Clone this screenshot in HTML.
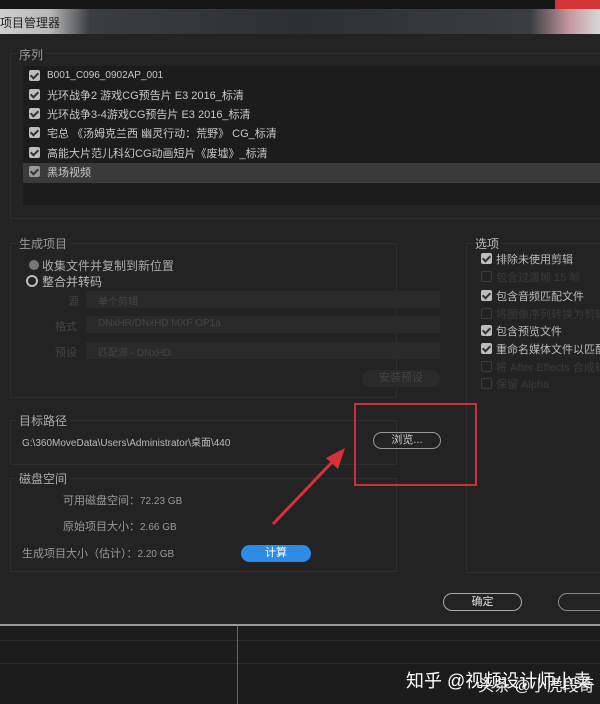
<!DOCTYPE html><html><head><meta charset="utf-8"><style>
*{margin:0;padding:0;box-sizing:border-box}
body{width:600px;height:704px;overflow:hidden;background:#232323;position:relative;font-family:"Liberation Sans","Noto Sans CJK SC",sans-serif;color:#c8c8c8;font-size:11px}
.a{position:absolute;white-space:nowrap}
.cb{position:absolute;width:11px;height:11px;background:#bdbdbd;border-radius:2px}
.cb::after{content:"";position:absolute;left:3px;top:1px;width:3px;height:6px;border:solid #333;border-width:0 2px 2px 0;transform:rotate(45deg)}
.ce{position:absolute;width:11px;height:11px;border:1px solid #3a3a3a;border-radius:2px}
.dd{position:absolute;left:86px;width:354px;height:17px;background:#2a2a2a;color:#444;font-size:10px;padding:2px 12px}
.fr{position:absolute;border:1px solid #2e2e2e}
</style></head><body>
<div class="a" style="left:0;top:0;width:600px;height:9px;background:#161616"></div>
<div class="a" style="left:555px;top:0;width:45px;height:9px;background:#d03434"></div>
<div class="a" style="left:0;top:9px;width:600px;height:25px;background:linear-gradient(90deg,#cfcfcf 0,#b8b8b8 50px,#3a3d42 90px,#2c2f33 300px,#3a3d42 530px,#c59aa0 570px,#d8d8d8 600px)"></div>
<div class="a" style="left:0;top:14px;color:#222;font-size:12px">项目管理器</div>
<div class="fr" style="left:10px;top:53px;width:600px;height:166px"></div>
<div class="a" style="left:16px;top:46px;background:#232323;padding:0 3px;font-size:12px;color:#999">序列</div>
<div class="a" style="left:23px;top:66px;width:580px;height:139px;background:#1c1c1c"></div>
<div class="a" style="left:23px;top:163px;width:580px;height:20px;background:#3a3a3a"></div>
<div class="cb" style="left:29px;top:70px"></div><div class="a" style="left:47px;top:70px;font-size:10px">B001_C096_0902AP_001</div>
<div class="cb" style="left:29px;top:89px"></div><div class="a" style="left:47px;top:87px">光环战争2 游戏CG预告片 E3 2016_标清</div>
<div class="cb" style="left:29px;top:108px"></div><div class="a" style="left:47px;top:106px">光环战争3-4游戏CG预告片 E3 2016_标清</div>
<div class="cb" style="left:29px;top:127px"></div><div class="a" style="left:47px;top:125px">宅总 《汤姆克兰西 幽灵行动：荒野》 CG_标清</div>
<div class="cb" style="left:29px;top:147px"></div><div class="a" style="left:47px;top:145px">高能大片范儿科幻CG动画短片《废墟》_标清</div>
<div class="cb" style="left:29px;top:166px;background:#999"></div><div class="a" style="left:47px;top:164px">黑场视频</div>
<div class="fr" style="left:10px;top:243px;width:387px;height:155px"></div>
<div class="a" style="left:16px;top:235px;background:#232323;padding:0 3px;font-size:12px;color:#999">生成项目</div>
<div class="a" style="left:29px;top:260px;width:10px;height:10px;border-radius:50%;background:#777"></div>
<div class="a" style="left:42px;top:257px;font-size:12px;color:#aaa">收集文件并复制到新位置</div>
<div class="a" style="left:26px;top:275px;width:12px;height:12px;border-radius:50%;border:2px solid #bbb"></div>
<div class="a" style="left:42px;top:273px;font-size:12px;color:#bbb">整合并转码</div>
<div class="a" style="left:68px;top:293px;color:#444">源</div><div class="dd" style="top:291px">单个剪辑</div>
<div class="a" style="left:55px;top:318px;color:#444">格式</div><div class="dd" style="top:316px">DNxHR/DNxHD MXF OP1a</div>
<div class="a" style="left:55px;top:344px;color:#444">预设</div><div class="dd" style="top:342px">匹配源 - DNxHD</div>
<div class="a" style="left:362px;top:370px;width:78px;height:17px;border-radius:9px;background:#2a2a2a;color:#444;text-align:center;line-height:17px">安装预设</div>
<div class="fr" style="left:466px;top:243px;width:140px;height:330px"></div>
<div class="a" style="left:473px;top:235px;background:#232323;padding:0 2px;font-size:12px;color:#bbb">选项</div>
<div class="cb" style="left:481px;top:253px"></div><div class="a" style="left:496px;top:251px;color:#bbb">排除未使用剪辑</div>
<div class="ce" style="left:481px;top:271px"></div><div class="a" style="left:496px;top:269px;color:#3a3a3a">包含过渡帧 15 帧</div>
<div class="cb" style="left:481px;top:290px"></div><div class="a" style="left:496px;top:288px;color:#bbb">包含音频匹配文件</div>
<div class="ce" style="left:481px;top:308px"></div><div class="a" style="left:496px;top:306px;color:#3a3a3a">将图像序列转换为剪辑</div>
<div class="cb" style="left:481px;top:325px"></div><div class="a" style="left:496px;top:323px;color:#bbb">包含预览文件</div>
<div class="cb" style="left:481px;top:343px"></div><div class="a" style="left:496px;top:341px;color:#bbb">重命名媒体文件以匹配</div>
<div class="ce" style="left:481px;top:361px"></div><div class="a" style="left:496px;top:359px;color:#3a3a3a">将 After Effects 合成转换</div>
<div class="ce" style="left:481px;top:378px"></div><div class="a" style="left:496px;top:376px;color:#3a3a3a">保留 Alpha</div>
<div class="fr" style="left:10px;top:420px;width:387px;height:45px"></div>
<div class="a" style="left:16px;top:412px;background:#232323;padding:0 3px;font-size:12px;color:#aaa">目标路径</div>
<div class="a" style="left:22px;top:434px;font-size:10px;color:#bbb">G:\360MoveData\Users\Administrator\桌面\440</div>
<div class="a" style="left:373px;top:432px;width:68px;height:17px;border:1px solid #999;border-radius:9px;text-align:center;line-height:15px;color:#ccc">浏览...</div>
<div class="fr" style="left:10px;top:478px;width:387px;height:94px"></div>
<div class="a" style="left:16px;top:470px;background:#232323;padding:0 3px;font-size:12px;color:#aaa">磁盘空间</div>
<div class="a" style="left:63px;top:492px;color:#999">可用磁盘空间：<span style="font-size:10px">72.23 GB</span></div>
<div class="a" style="left:63px;top:518px;color:#999">原始项目大小：<span style="font-size:10px">2.66 GB</span></div>
<div class="a" style="left:22px;top:545px;color:#999">生成项目大小（估计）：<span style="font-size:10px">2.20 GB</span></div>
<div class="a" style="left:241px;top:545px;width:70px;height:17px;border-radius:9px;background:#2d8ce6;color:#fff;text-align:center;line-height:17px">计算</div>
<div class="a" style="left:443px;top:593px;width:79px;height:18px;border:1px solid #aaa;border-radius:9px;text-align:center;line-height:16px;color:#ddd">确定</div>
<div class="a" style="left:558px;top:593px;width:60px;height:18px;border:1px solid #888;border-radius:9px"></div>
<div class="a" style="left:354px;top:403px;width:123px;height:83px;border:2px solid #c8323a"></div>
<svg class="a" style="left:0;top:0" width="600" height="704"><line x1="273" y1="524" x2="336" y2="458" stroke="#d8303a" stroke-width="3"/><polygon points="345,448 326,458 338,469" fill="#d8303a"/></svg>
<div class="a" style="left:0;top:624px;width:600px;height:80px;background:#1c1c1c;border-top:2px solid #9a9a9a"></div>
<div class="a" style="left:0;top:640px;width:600px;height:1px;background:#2a2a2a"></div>
<div class="a" style="left:0;top:663px;width:600px;height:1px;background:#2a2a2a"></div>
<div class="a" style="left:237px;top:626px;width:1px;height:78px;background:#4a6a9a"></div>
<div class="a" style="left:406px;top:667px;font-size:18px;color:#fff">知乎 @视频设计师小卖</div>
<div class="a" style="left:478px;top:672px;font-size:16px;color:#eee">头条 @小虎段奇</div>
</body></html>
